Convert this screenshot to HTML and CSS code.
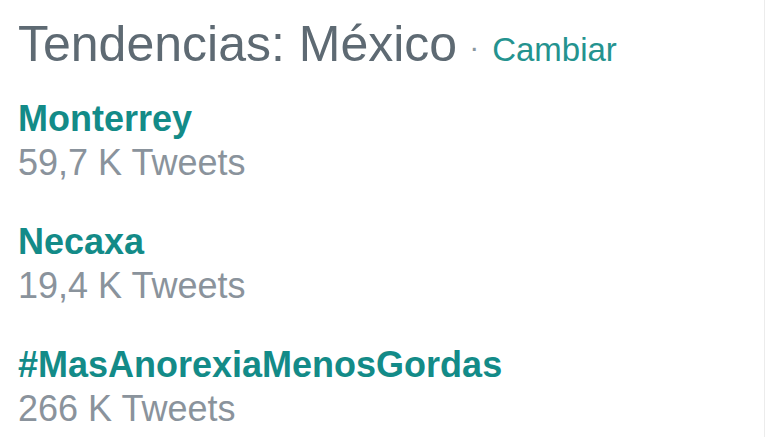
FILE: index.html
```html
<!DOCTYPE html>
<html lang="es">
<head>
<meta charset="utf-8">
<title>Tendencias: México</title>
<link rel="stylesheet" href="styles.css">
</head>
<body>
<div class="trends">
  <div class="trends-header">
    <span class="trends-title">Tendencias: México</span><span class="sep">·</span><a class="change" href="#">Cambiar</a>
  </div>
  <ul class="trend-list">
    <li class="trend">
      <a class="trend-name" href="#">Monterrey</a>
      <div class="trend-count">59,7 K Tweets</div>
    </li>
    <li class="trend">
      <a class="trend-name" href="#">Necaxa</a>
      <div class="trend-count">19,4 K Tweets</div>
    </li>
    <li class="trend">
      <a class="trend-name" href="#">#MasAnorexiaMenosGordas</a>
      <div class="trend-count">266 K Tweets</div>
    </li>
  </ul>
</div>
</body>
</html>
```

FILE: styles.css
```css
html, body {
  margin: 0;
  padding: 0;
  background: #ffffff;
}

body {
  font-family: "Liberation Sans", Arial, sans-serif;
}

.trends {
  width: 765px;
  height: 437px;
  box-sizing: border-box;
  border-right: 1px solid #ececec;
  padding: 16px 0 0 18px;
}

.trends-header {
  line-height: 56px;
  height: 56px;
  white-space: nowrap;
}

.trends-title {
  font-size: 50px;
  color: #5e6a73;
}

.sep {
  font-size: 30px;
  color: #8a979f;
  margin: 0 13px 0 12px;
  vertical-align: 4px;
}

.change {
  font-size: 33px;
  color: #24938f;
  text-decoration: none;
}

.trend-list {
  list-style: none;
  margin: 25px 0 0 0;
  padding: 0;
  display: flex;
  flex-direction: column;
  gap: 35px;
}

.trend {
  display: flex;
  flex-direction: column;
}

.trend-name {
  font-size: 36px;
  font-weight: bold;
  line-height: 44px;
  color: #138b88;
  text-decoration: none;
}

.trend-count {
  font-size: 36px;
  line-height: 44px;
  color: #8a939c;
}
```
